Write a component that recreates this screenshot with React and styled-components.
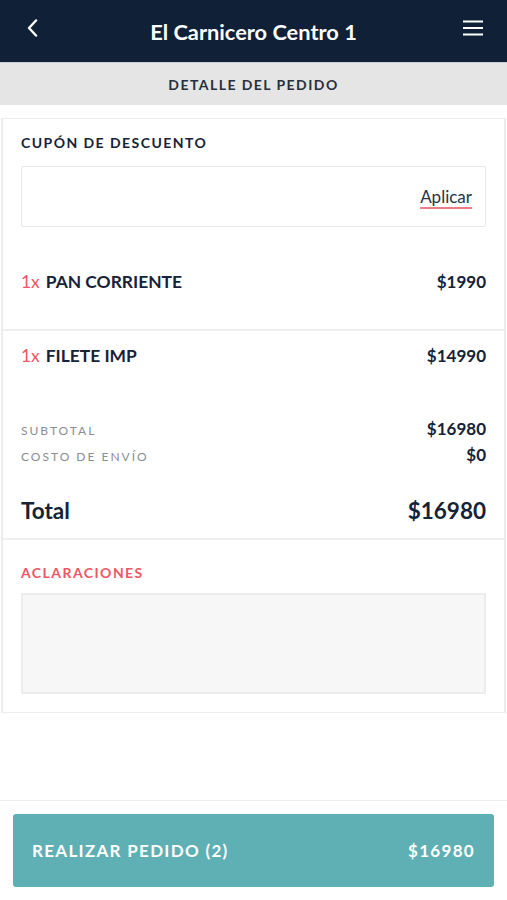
import React from "react";
import styled, { createGlobalStyle } from "styled-components";

const Global = createGlobalStyle`
  html, body { margin: 0; padding: 0; background: #fff; }
  body { font-family: Lato, "Open Sans", sans-serif; color: #162235; }
  * { box-sizing: border-box; }
`;

const Page = styled.div`
  min-height: 100vh;
  display: flex;
  flex-direction: column;
`;

const Header = styled.header`
  height: 62px;
  background: #0f2037;
  display: grid;
  grid-template-columns: 60px 1fr 60px;
  align-items: center;
  color: #fff;
`;

const IconBtn = styled.div`
  display: flex;
  justify-content: ${(p) => p.$align};
  padding: ${(p) => p.$pad};
  margin-top: -6px;
`;

const Title = styled.h1`
  margin: 0;
  text-align: center;
  font-size: 21.8px;
  font-weight: 700;
  color: #fff;
`;

const SubHeader = styled.div`
  height: 43px;
  background: #e5e5e5;
  display: flex;
  align-items: center;
  justify-content: center;
  font-size: 14px;
  font-weight: 700;
  letter-spacing: 1.45px;
  color: #27303d;
  border-top: 1px solid #c9ced4;
`;

const Card = styled.section`
  margin: 13px 1px 0;
  border: 1px solid #ececec;
  border-right-width: 2px;
  border-left-width: 2px;
  background: #fff;
`;

const Block = styled.div`
  padding: ${(p) => p.$pad};
  border-bottom: ${(p) => (p.$divider ? "2px solid #efefef" : "none")};
`;

const Label = styled.div`
  font-size: 14px;
  font-weight: 700;
  letter-spacing: 1.45px;
  color: ${(p) => p.$color || "#162235"};
`;

const CouponBox = styled.div`
  margin-top: 15px;
  height: 61px;
  border: 1px solid #e8e8e8;
  border-radius: 2px;
  display: flex;
  align-items: center;
  justify-content: flex-end;
  padding-right: 13px;
`;

const Apply = styled.span`
  font-size: 17px;
  color: #2b3442;
  text-decoration: underline;
  text-decoration-color: #f07a85;
  text-decoration-thickness: 1.5px;
  text-underline-offset: 4px;
`;

const Row = styled.div`
  display: flex;
  justify-content: space-between;
  align-items: baseline;
  margin-top: ${(p) => p.$mt || "0px"};
`;

const ItemName = styled.span`
  font-size: 17.4px;
  font-weight: 700;
  color: #162235;
`;

const Qty = styled.span`
  color: #ef5665;
  font-weight: 400;
  margin-right: 6px;
`;

const Price = styled.span`
  font-size: ${(p) => p.$size || "17px"};
  font-weight: 700;
  color: #162235;
`;

const SmallLabel = styled.span`
  font-size: 12px;
  letter-spacing: 2px;
  color: #8a8d92;
`;

const TotalLabel = styled.span`
  font-size: 22.5px;
  font-weight: 700;
  color: #162235;
`;

const NotesBox = styled.div`
  margin-top: 12px;
  height: 101px;
  background: #f7f7f7;
  border: 2px solid #ececec;
`;

const Footer = styled.footer`
  margin-top: auto;
  border-top: 1px solid #ececec;
  padding: 13px 13px 13px;
`;

const OrderButton = styled.button`
  width: 100%;
  height: 73px;
  border: none;
  border-radius: 3px;
  background: #5fb0b4;
  color: #fff;
  display: flex;
  align-items: center;
  justify-content: space-between;
  padding: 0 19px 0 19px;
  font-family: Lato, sans-serif;
  font-size: 17px;
  font-weight: 700;
  letter-spacing: 1.3px;
`;

const BackIcon = () => (
  <svg width="12" height="18" viewBox="0 0 12 18">
    <path d="M10 1.5 L3 9 L10 16.5" fill="none" stroke="#fff" strokeWidth="2.4" strokeLinecap="round" strokeLinejoin="round" />
  </svg>
);

const MenuIcon = () => (
  <svg width="20" height="16" viewBox="0 0 20 16">
    <path d="M0 1.5 H20 M0 8 H20 M0 14.5 H20" stroke="#fff" strokeWidth="2" />
  </svg>
);

const items = [
  { qty: 1, name: "PAN CORRIENTE", price: "$1990" },
  { qty: 1, name: "FILETE IMP", price: "$14990" },
];

export default function App() {
  return (
    <Page>
      <Global />
      <Header>
        <IconBtn $align="flex-start" $pad="0 0 0 26px"><BackIcon /></IconBtn>
        <Title>El Carnicero Centro 1</Title>
        <IconBtn $align="flex-end" $pad="0 24px 0 0"><MenuIcon /></IconBtn>
      </Header>
      <SubHeader>DETALLE DEL PEDIDO</SubHeader>
      <Card>
        <Block $pad="15px 18px 0">
          <Label>CUPÓN DE DESCUENTO</Label>
          <CouponBox><Apply>Aplicar</Apply></CouponBox>
        </Block>
        <Block $pad="44px 18px 37px" $divider>
          <Row>
            <ItemName><Qty>{items[0].qty}x</Qty>{items[0].name}</ItemName>
            <Price>{items[0].price}</Price>
          </Row>
        </Block>
        <Block $pad="14px 18px 0">
          <Row>
            <ItemName><Qty>{items[1].qty}x</Qty>{items[1].name}</ItemName>
            <Price>{items[1].price}</Price>
          </Row>
          <Row $mt="52px">
            <SmallLabel>SUBTOTAL</SmallLabel>
            <Price>$16980</Price>
          </Row>
          <Row $mt="5px">
            <SmallLabel>COSTO DE ENVÍO</SmallLabel>
            <Price>$0</Price>
          </Row>
        </Block>
        <Block $pad="32px 18px 14px" $divider>
          <Row>
            <TotalLabel>Total</TotalLabel>
            <Price $size="22.5px">$16980</Price>
          </Row>
        </Block>
        <Block $pad="24px 18px 18px">
          <Label $color="#ef5665">ACLARACIONES</Label>
          <NotesBox />
        </Block>
      </Card>
      <Footer>
        <OrderButton>
          <span>REALIZAR PEDIDO (2)</span>
          <span>$16980</span>
        </OrderButton>
      </Footer>
    </Page>
  );
}
